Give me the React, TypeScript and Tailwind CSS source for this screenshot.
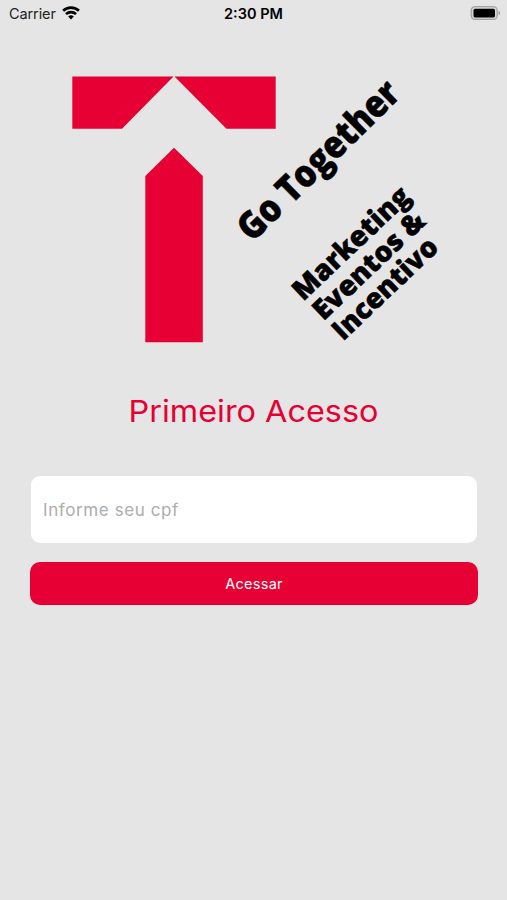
import React, { useState } from "react";

const StatusBar: React.FC = () => {
  return (
    <div className="grid h-7 grid-cols-3 items-center px-[9px] font-['Inter',sans-serif] text-black">
      <div className="flex items-center gap-[6px]">
        <span className="text-[14.5px] tracking-[-0.1px] text-[#222]">Carrier</span>
        <svg className="-mt-[2px]" width="18" height="14" viewBox="0 0 18 14" fill="none" stroke="#000" strokeWidth="2.7">
          <path d="M1.1 4.8a11.2 11.2 0 0 1 15.8 0" />
          <path d="M4 8.1a7.1 7.1 0 0 1 10 0" />
          <path d="M9 13.4 6.2 10.6a4 4 0 0 1 5.6 0z" fill="#000" stroke="none" />
        </svg>
      </div>
      <span className="text-center text-[14.5px] font-semibold">2:30 PM</span>
      <div className="flex justify-end">
        <svg className="-mr-[4px] -mt-[2px]" width="32" height="16" viewBox="0 0 32 16">
          <rect x="1.2" y="1.7" width="26" height="12.6" rx="3.8" fill="#d6d6d6" stroke="#a3a3a3" strokeWidth="1.3" />
          <rect x="3.5" y="3.8" width="21.5" height="8.6" rx="1.6" fill="#000" />
          <path d="M28.6 5.7c2 .9 2 3.7 0 4.6z" fill="#999" />
        </svg>
      </div>
    </div>
  );
};

const Logo: React.FC = () => {
  return (
    <svg
      className="ml-[72px] mt-12 h-[268px] w-[376px] overflow-visible font-['Open_Sans',sans-serif] font-extrabold"
      viewBox="72 76 376 268"
    >
      <g fill="#e60033">
        <path d="M72.3 76.5H173.5L122 128.7H72.3z" />
        <path d="M174.5 76.5H275.7V128.7H226.5z" />
        <path d="M174 147.7 202.8 176V342.2H145.3V176z" />
      </g>
      <g fill="#000" stroke="#000" strokeWidth="0.5">
        <text transform="translate(254.5 241) rotate(-44.5)" x="-3" fontSize="37.5" textLength="210" lengthAdjust="spacingAndGlyphs">
          Go Together
        </text>
        <text transform="translate(303.3 301.7) rotate(-43.5)" x="0" fontSize="28" textLength="150" lengthAdjust="spacingAndGlyphs">
          Marketing
        </text>
        <text transform="translate(323.5 321.5) rotate(-43.5)" x="0" fontSize="28" textLength="143" lengthAdjust="spacingAndGlyphs">
          Eventos &amp;
        </text>
        <text transform="translate(343 341.5) rotate(-43.5)" x="0" fontSize="28" textLength="134" lengthAdjust="spacingAndGlyphs">
          Incentivo
        </text>
      </g>
    </svg>
  );
};

const App: React.FC = () => {
  const [cpf, setCpf] = useState("");

  return (
    <div className="min-h-screen overflow-hidden bg-[#e5e5e5] font-['Inter',sans-serif]">
      <StatusBar />
      <Logo />

      <h1 className="mt-[47px] scale-x-[1.08] text-center text-[30px] leading-10 text-[#e60033]">
        Primeiro Acesso
      </h1>

      <form className="mt-[45px] flex flex-col px-[30px]" onSubmit={(e) => e.preventDefault()}>
        <input
          className="ml-px h-[67px] rounded-[9px] bg-white px-3 text-[17px] tracking-[0.6px] text-gray-800 outline-none placeholder:text-[#adadad]"
          placeholder="Informe seu cpf"
          value={cpf}
          onChange={(e) => setCpf(e.target.value)}
        />
        <button
          type="submit"
          className="-mr-px mt-[19px] h-[43px] rounded-[10px] bg-[#e60033] text-[14.5px] tracking-[0.3px] text-white"
        >
          Acessar
        </button>
      </form>
    </div>
  );
};

export default App;
